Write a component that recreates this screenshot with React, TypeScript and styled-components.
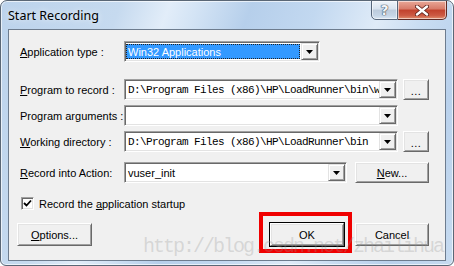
import React from 'react';
import styled, { createGlobalStyle } from 'styled-components';

const Global = createGlobalStyle`
  html, body {
    margin: 0;
    padding: 0;
    background: #ffffff;
  }
  * { box-sizing: border-box; }
`

const Window = styled.div`
  position: relative;
  width: 454px;
  height: 266px;
  display: flex;
  flex-direction: column;
  padding: 0 7px 4px 7px;
  border: 1px solid #5a6776;
  border-radius: 7px 7px 6px 6px;
  background:
    linear-gradient(110deg, #bcd3ec 0%, #c6daef 22%, #e2edf9 31%, #d4e4f5 36%, #b6cfeb 46%, #c2d8f0 58%, #dfebf8 70%, #c9ddf2 78%, #b9d1ec 88%, #c7dbf0 100%);
  box-shadow: inset 0 0 0 1px rgba(255, 255, 255, 0.65);
  overflow: hidden;
`

const TitleBar = styled.div`
  height: 28px;
  display: flex;
  align-items: flex-start;
  flex-shrink: 0;
`

const Title = styled.div`
  margin-top: 6px;
  font-family: "Noto Sans", "Liberation Sans", sans-serif;
  font-size: 12.5px;
  color: #000;
  text-shadow: 0 0 6px rgba(255, 255, 255, 0.9);
`

const CaptionButtons = styled.div`
  margin-left: auto;
  margin-right: -1px;
  margin-top: -1px;
  display: flex;
`

const CaptionButton = styled.div<{ $w: number; $close?: boolean }>`
  width: ${p => p.$w}px;
  height: 20px;
  display: flex;
  align-items: center;
  justify-content: center;
  border: 1px solid ${p => (p.$close ? '#5e2a24' : '#56667a')};
  border-left-width: ${p => (p.$close ? 0 : 1)}px;
  border-radius: ${p => (p.$close ? '0 0 5px 0' : '0 0 0 5px')};
  background: ${p =>
    p.$close
      ? 'linear-gradient(#e9a898 0%, #d77a68 45%, #c1412c 50%, #cc5a43 80%, #e08f6e 100%)'
      : 'linear-gradient(#eef3f9 0%, #d8e3ef 45%, #bccbdc 50%, #c5d5e6 80%, #d9e6f3 100%)'};
  box-shadow: inset 0 0 0 1px rgba(255, 255, 255, 0.55);
`

const HelpGlyph = styled.span`
  font-family: "DejaVu Sans", sans-serif;
  font-weight: bold;
  font-size: 14px;
  color: #f4f6f9;
  text-shadow: 0 0 1px #3d4a5a, 0 0 1px #3d4a5a, 0 0 1px #3d4a5a;
`

const Client = styled.div`
  flex: 1;
  display: flex;
  flex-direction: column;
  padding: 0 16px 0 8px;
  background: #f0f0f0;
  border: 1px solid #6d7c8e;
  font-family: "Liberation Sans", Arial, sans-serif;
  font-size: 11px;
  color: #000;
`

const Row = styled.div<{ $top: number; $h: number }>`
  display: flex;
  align-items: center;
  margin-top: ${p => p.$top}px;
  height: ${p => p.$h}px;
  flex-shrink: 0;
`

const Label = styled.div`
  width: 104px;
  margin-left: 3px;
  flex-shrink: 0;
  white-space: nowrap;
`

const Key = styled.span`
  text-decoration: underline;
  text-underline-offset: 1px;
`

const Combo = styled.div<{ $w: number }>`
  width: ${p => p.$w}px;
  height: 21px;
  display: flex;
  border-style: solid;
  border-width: 1px;
  border-color: #a0a0a0 #ffffff #ffffff #a0a0a0;
  box-shadow: inset 1px 1px 0 #696969, inset -1px -1px 0 #e3e3e3;
  background: #ffffff;
  padding: 1px;
  flex-shrink: 0;
`

const ComboText = styled.div<{ $mono?: boolean; $selected?: boolean }>`
  flex: 1;
  min-width: 0;
  overflow: hidden;
  white-space: nowrap;
  display: flex;
  align-items: center;
  padding-left: 2px;
  margin: ${p => (p.$selected ? '1px 1px 1px 0' : '0')};
  font-family: ${p => (p.$mono ? '"Liberation Mono", "Courier New", monospace' : 'inherit')};
  font-size: ${p => (p.$mono ? '11px' : 'inherit')};
  letter-spacing: ${p => (p.$mono ? '-0.6px' : 'normal')};
  color: ${p => (p.$selected ? '#ffffff' : '#000000')};
  background: ${p => (p.$selected ? '#3399ff' : 'transparent')};
  outline: ${p => (p.$selected ? '1px dotted #222' : 'none')};
  outline-offset: -1px;
`

const DropButton = styled.div`
  width: 17px;
  flex-shrink: 0;
  display: flex;
  align-items: center;
  justify-content: center;
  background: #f0f0f0;
  border-style: solid;
  border-width: 1px;
  border-color: #e3e3e3 #696969 #696969 #e3e3e3;
  box-shadow: inset 1px 1px 0 #ffffff, inset -1px -1px 0 #a0a0a0;
`

const Button = styled.div<{ $w: number; $default?: boolean; $gap?: number }>`
  width: ${p => p.$w}px;
  height: ${p => (p.$default ? 23 : 21)}px;
  margin-left: ${p => p.$gap ?? 0}px;
  flex-shrink: 0;
  display: flex;
  align-items: center;
  justify-content: center;
  background: #f0f0f0;
  border-style: solid;
  border-width: 1px;
  border-color: #ffffff #696969 #696969 #ffffff;
  box-shadow: inset 1px 1px 0 #e3e3e3, inset -1px -1px 0 #a0a0a0;
  outline: ${p => (p.$default ? '1px solid #000' : 'none')};
  outline-offset: 0;
  white-space: nowrap;
`

const DialogButton = styled(Button)`
  height: 23px;
`

const Dots = styled.span`
  line-height: 11px;
  margin-top: 3px;
  letter-spacing: 0.5px;
`

const CheckBox = styled.div`
  width: 13px;
  height: 13px;
  margin-left: 4px;
  display: flex;
  align-items: center;
  justify-content: center;
  background: #ffffff;
  border-style: solid;
  border-width: 1px;
  border-color: #a0a0a0 #ffffff #ffffff #a0a0a0;
  box-shadow: inset 1px 1px 0 #696969, inset -1px -1px 0 #e3e3e3;
`

const CheckText = styled.div`
  margin-left: 5px;
  white-space: nowrap;
`

const Highlight = styled.div`
  position: relative;
  margin-left: auto;
  display: flex;
`

const RedBox = styled.div`
  position: absolute;
  left: -11px;
  right: -8px;
  top: -11px;
  bottom: -7px;
  border: 4px solid #f00000;
  pointer-events: none;
`

const Watermark = styled.div`
  position: absolute;
  left: 142px;
  top: 234px;
  font-family: "Liberation Mono", "Courier New", monospace;
  font-size: 20px;
  letter-spacing: -2px;
  color: rgba(150, 150, 150, 0.3);
  white-space: nowrap;
  pointer-events: none;
`

const Arrow = () => (
  <svg width="7" height="4" viewBox="0 0 7 4">
    <polygon points="0,0 7,0 3.5,4" fill="#000" />
  </svg>
)

const CloseX = () => (
  <svg width="14" height="11" viewBox="0 0 14 11">
    <path d="M2 1.5 L12 9.5 M12 1.5 L2 9.5" stroke="#5a1f18" strokeWidth="4" strokeLinecap="round" />
    <path d="M2 1.5 L12 9.5 M12 1.5 L2 9.5" stroke="#ffffff" strokeWidth="2.4" strokeLinecap="round" />
  </svg>
)

const Check = () => (
  <svg width="9" height="9" viewBox="0 0 9 9">
    <path d="M1 4 L3.5 6.5 L8 1.5" stroke="#000" strokeWidth="1.8" fill="none" />
  </svg>
)

const path = 'D:\\Program Files (x86)\\HP\\LoadRunner\\bin'

function App() {
  return (
    <>
      <Global />
      <Window>
        <TitleBar>
          <Title>Start Recording</Title>
          <CaptionButtons>
            <CaptionButton $w={27}><HelpGlyph>?</HelpGlyph></CaptionButton>
            <CaptionButton $w={49} $close><CloseX /></CaptionButton>
          </CaptionButtons>
        </TitleBar>
        <Client>
          <Row $top={11} $h={21}>
            <Label><Key>A</Key>pplication type :</Label>
            <Combo $w={196}>
              <ComboText $selected>Win32 Applications</ComboText>
              <DropButton><Arrow /></DropButton>
            </Combo>
          </Row>
          <Row $top={17} $h={21}>
            <Label><Key>P</Key>rogram to record :</Label>
            <Combo $w={274}>
              <ComboText $mono>{path + '\\wplus_init_wsock.exe'}</ComboText>
              <DropButton><Arrow /></DropButton>
            </Combo>
            <Button $w={26} $gap={5}><Dots>...</Dots></Button>
          </Row>
          <Row $top={5} $h={21}>
            <Label>Program arguments :</Label>
            <Combo $w={274}>
              <ComboText />
              <DropButton><Arrow /></DropButton>
            </Combo>
          </Row>
          <Row $top={5} $h={21}>
            <Label><Key>W</Key>orking directory :</Label>
            <Combo $w={274}>
              <ComboText $mono>{path}</ComboText>
              <DropButton><Arrow /></DropButton>
            </Combo>
            <Button $w={26} $gap={5}><Dots>...</Dots></Button>
          </Row>
          <Row $top={10} $h={21}>
            <Label><Key>R</Key>ecord into Action:</Label>
            <Combo $w={223}>
              <ComboText>vuser_init</ComboText>
              <DropButton><Arrow /></DropButton>
            </Combo>
            <Button $w={74} $gap={8}><span><Key>N</Key>ew...</span></Button>
          </Row>
          <Row $top={14} $h={13}>
            <CheckBox><Check /></CheckBox>
            <CheckText>Record the <Key>a</Key>pplication startup</CheckText>
          </Row>
          <Row $top={13} $h={23}>
            <DialogButton $w={75}><span><Key>O</Key>ptions...</span></DialogButton>
            <Highlight>
              <DialogButton $w={74} $default>OK</DialogButton>
              <RedBox />
            </Highlight>
            <DialogButton $w={74} $gap={11}>Cancel</DialogButton>
          </Row>
        </Client>
        <Watermark>http://blog.csdn.net/zhailihua</Watermark>
      </Window>
    </>
  );
}

export default App;
